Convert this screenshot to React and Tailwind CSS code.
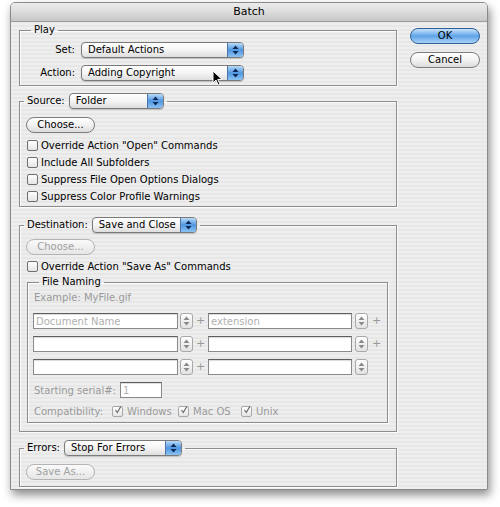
import React from "react";

const FONT = { fontFamily: '"DejaVu Sans", "Liberation Sans", sans-serif' };

const Arrows = ({ color = "#0d2a57" }) => (
  <svg width="7" height="10" viewBox="0 0 7 10">
    <path d="M3.5 0.5 L6.5 4 L0.5 4 Z" fill={color} />
    <path d="M3.5 9.5 L6.5 6 L0.5 6 Z" fill={color} />
  </svg>
);

const Popup = ({ label, width }) => (
  <div
    className="flex h-[16px] items-stretch rounded-[4px] border border-[#7a7a7a] bg-linear-to-b from-white via-[#f4f4f4] to-[#dedede] shadow-[0_1px_1px_rgba(0,0,0,0.18)]"
    style={{ width }}
  >
    <span className="flex-1 truncate pl-[6px] text-[10px] leading-[14px] text-black">
      {label}
    </span>
    <span className="flex w-[16px] items-center justify-center rounded-r-[3px] border-l border-[#4d74a6] bg-linear-to-b from-[#b9dbf8] via-[#4f96e0] to-[#8cc2f2]">
      <Arrows />
    </span>
  </div>
);

const PillButton = ({ children, disabled, primary, className = "" }) => (
  <div
    className={`flex h-[16px] items-center justify-center rounded-full border text-[10px] leading-none ${
      primary
        ? "border-[#2f5f98] bg-linear-to-b from-[#c9e3fa] via-[#5ea4e8] to-[#a8d2f7] text-black"
        : disabled
        ? "border-[#b4b4b4] bg-linear-to-b from-[#fafafa] to-[#e6e6e6] text-[#a0a0a0]"
        : "border-[#7c7c7c] bg-linear-to-b from-white via-[#f2f2f2] to-[#dcdcdc] text-black"
    } ${className}`}
  >
    {children}
  </div>
);

const Checkbox = ({ checked, disabled }) => (
  <span
    className={`relative flex h-[11px] w-[11px] shrink-0 items-center justify-center rounded-[2px] border bg-linear-to-b from-white to-[#e4e4e4] ${
      disabled ? "border-[#a8a8a8]" : "border-[#6f6f6f]"
    }`}
  >
    {checked && (
      <svg width="11" height="12" viewBox="0 0 11 12" className="-mt-[3px] ml-[1px]">
        <path d="M2 6 L4.5 9.5 L9.5 1" stroke="#6a6a6a" strokeWidth="1.6" fill="none" />
      </svg>
    )}
  </span>
);

const CheckRow = ({ label }) => (
  <div className="ml-[7px] flex h-[17px] items-center gap-[3px] text-[10px] text-black">
    <Checkbox />
    <span>{label}</span>
  </div>
);

const Field = ({ placeholder, width }) => (
  <div
    className="flex h-[16px] items-center border border-[#8a8a8a] border-t-[#5e5e5e] bg-white pl-[2px] text-[10px] text-[#b0b0b0] shadow-[inset_0_1px_1px_rgba(0,0,0,0.15)]"
    style={{ width }}
  >
    {placeholder}
  </div>
);

const Stepper = () => (
  <div className="flex h-[16px] w-[13px] items-center justify-center rounded-[3px] border border-[#a8a8a8] bg-linear-to-b from-white to-[#e2e2e2]">
    <Arrows color="#8a8a8a" />
  </div>
);

const NameRow = ({ first, second, lastPlus = true }) => (
  <div className="ml-[5px] flex h-[16px] items-center">
    <Field placeholder={first} width={145} />
    <div className="ml-[2px]">
      <Stepper />
    </div>
    <span className="w-[15px] text-center text-[11px] text-[#9a9a9a]">+</span>
    <Field placeholder={second} width={144} />
    <div className="ml-[3px]">
      <Stepper />
    </div>
    {lastPlus && <span className="w-[17px] text-center text-[11px] text-[#9a9a9a]">+</span>}
  </div>
);

const Group = ({ legend, children, className = "" }) => (
  <fieldset
    className={`m-0 border border-[#8e8e8e] p-0 shadow-[inset_1px_1px_0_rgba(255,255,255,0.8),1px_1px_0_rgba(255,255,255,0.8)] ${className}`}
  >
    {legend}
    {children}
  </fieldset>
);

export default function App() {
  return (
    <div className="relative h-[507px] w-[500px] bg-white pl-[10px] pt-[2px]" style={FONT}>
      <div className="flex h-[488px] w-[478px] flex-col rounded-t-[5px] border border-[#8a8a8a] bg-[repeating-linear-gradient(180deg,#eeeeee_0px,#eeeeee_2px,#e7e7e7_2px,#e7e7e7_4px)] shadow-[2px_5px_10px_rgba(0,0,0,0.45)]">
        <div className="flex h-[19px] shrink-0 items-center justify-center rounded-t-[4px] border-b border-[#9c9c9c] bg-linear-to-b from-[#ececec] via-[#dcdcdc] to-[#c6c6c6] text-[11px] text-black">
          Batch
        </div>

        <div className="flex flex-1">
          <div className="ml-[8px] flex w-[378px] flex-col">
            {/* Play */}
            <Group
              legend={
                <legend className="ml-[11px] px-[3px] text-[10px] leading-[16px] text-black">Play</legend>
              }
              className="pb-[5px] pt-[4px]"
            >
              <div className="flex h-[15px] items-center">
                <span className="w-[58px] pr-[3px] text-right text-[10px]">Set:</span>
                <div className="ml-[3px]">
                  <Popup label="Default Actions" width={163} />
                </div>
              </div>
              <div className="mt-[8px] flex h-[15px] items-center">
                <span className="w-[58px] pr-[3px] text-right text-[10px]">Action:</span>
                <div className="ml-[3px]">
                  <Popup label="Adding Copyright" width={163} />
                </div>
              </div>
            </Group>

            {/* Source */}
            <Group
              legend={
                <legend className="ml-[4px] flex items-center gap-[4px] px-[3px] text-[10px] leading-[16px]">
                  <span>Source:</span>
                  <Popup label="Folder" width={95} />
                </legend>
              }
              className="mt-[7px] pb-[1px] pt-[8px]"
            >
              <PillButton className="ml-[6px] w-[69px]">Choose...</PillButton>
              <div className="mt-[4px]">
                <CheckRow label={'Override Action "Open" Commands'} />
                <CheckRow label="Include All Subfolders" />
                <CheckRow label="Suppress File Open Options Dialogs" />
                <CheckRow label="Suppress Color Profile Warnings" />
              </div>
            </Group>

            {/* Destination */}
            <Group
              legend={
                <legend className="ml-[4px] flex items-center gap-[4px] px-[3px] text-[10px] leading-[16px]">
                  <span>Destination:</span>
                  <Popup label="Save and Close" width={105} />
                </legend>
              }
              className="mt-[10px] pb-[8px] pt-[6px]"
            >
              <PillButton disabled className="ml-[6px] w-[69px]">
                Choose...
              </PillButton>
              <div className="mt-[3px]">
                <CheckRow label={'Override Action "Save As" Commands'} />
              </div>
              <Group
                legend={
                  <legend className="ml-[11px] px-[3px] text-[10px] leading-[14px] text-black">File Naming</legend>
                }
                className="ml-[7px] w-[361px] pb-[3px] pt-[2px]"
              >
                <div className="ml-[6px] h-[14px] text-[10px] leading-[14px] text-[#9a9a9a]">
                  Example: MyFile.gif
                </div>
                <div className="mt-[8px] flex flex-col gap-[7px]">
                  <NameRow first="Document Name" second="extension" />
                  <NameRow />
                  <NameRow lastPlus={false} />
                </div>
                <div className="ml-[6px] mt-[7px] flex h-[16px] items-center text-[10px] text-[#9a9a9a]">
                  <span className="w-[86px]">Starting serial#:</span>
                  <Field placeholder="1" width={42} />
                </div>
                <div className="ml-[6px] mt-[5px] flex h-[16px] items-center text-[10px] text-[#9a9a9a]">
                  <span className="w-[78px]">Compatibility:</span>
                  <Checkbox checked disabled />
                  <span className="ml-[4px] w-[51px]">Windows</span>
                  <Checkbox checked disabled />
                  <span className="ml-[4px] w-[48px]">Mac OS</span>
                  <Checkbox checked disabled />
                  <span className="ml-[4px]">Unix</span>
                </div>
              </Group>
            </Group>

            {/* Errors */}
            <Group
              legend={
                <legend className="ml-[4px] flex items-center gap-[4px] px-[3px] text-[10px] leading-[16px]">
                  <span>Errors:</span>
                  <Popup label="Stop For Errors" width={118} />
                </legend>
              }
              className="mt-[8px] pb-[6px] pt-[8px]"
            >
              <PillButton disabled className="ml-[6px] w-[69px]">
                Save As...
              </PillButton>
            </Group>
          </div>

          <div className="ml-[13px] flex w-[70px] flex-col gap-[8px] pt-[6px]">
            <PillButton primary>OK</PillButton>
            <PillButton>Cancel</PillButton>
          </div>
        </div>
      </div>

      {/* mouse pointer */}
      <svg
        className="absolute left-[212px] top-[70px]"
        width="11"
        height="16"
        viewBox="0 0 11 16"
      >
        <path
          d="M1 1 L1 13 L4 10 L6.2 15 L8 14.2 L5.8 9.4 L10 9.4 Z"
          fill="#000"
          stroke="#fff"
          strokeWidth="1"
          strokeLinejoin="round"
        />
      </svg>
    </div>
  );
}
